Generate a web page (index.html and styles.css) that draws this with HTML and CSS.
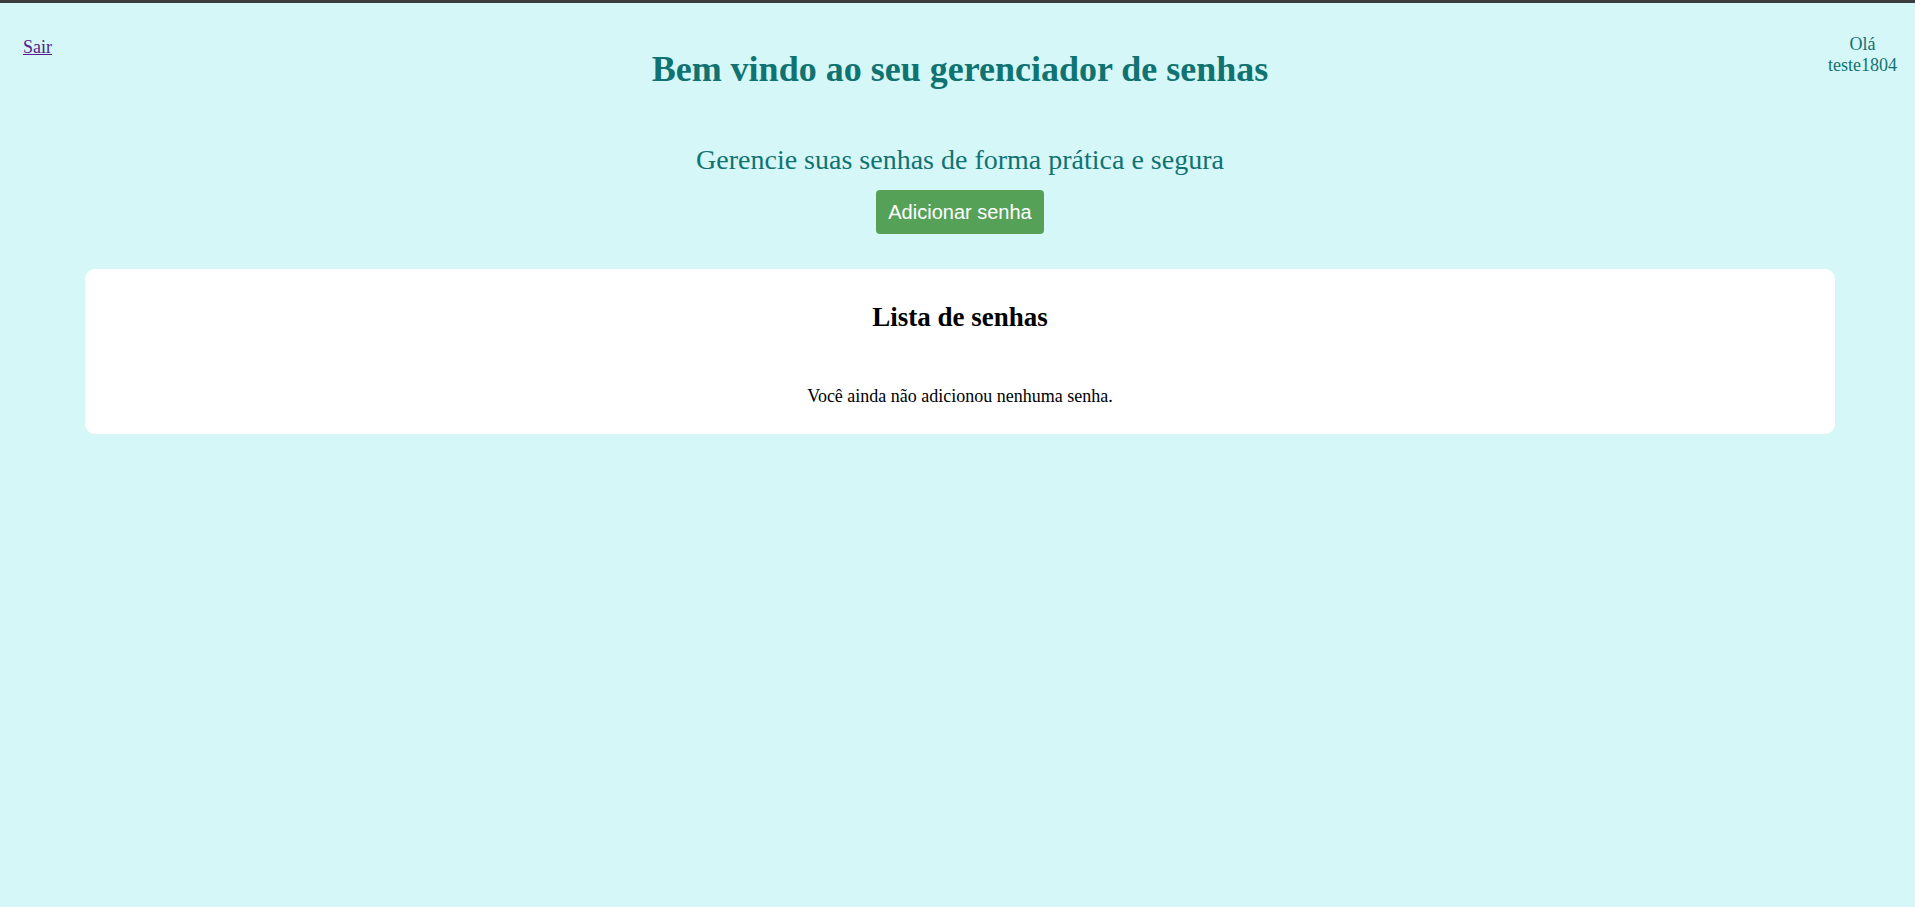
FILE: index.html
```html
<!DOCTYPE html>
<html lang="pt-BR">
<head>
<meta charset="utf-8">
<title>Gerenciador de senhas</title>
<link rel="stylesheet" href="styles.css">
</head>
<body>
<div class="page">
  <header class="header">
    <div class="header-left"><a class="logout" href="#">Sair</a></div>
    <h1 class="title">Bem vindo ao seu gerenciador de senhas</h1>
    <div class="greeting">Olá<br>teste1804</div>
  </header>
  <main class="main">
    <h2 class="subtitle">Gerencie suas senhas de forma prática e segura</h2>
    <button class="add-btn" type="button">Adicionar senha</button>
    <section class="card">
      <h2 class="card-title">Lista de senhas</h2>
      <p class="empty">Você ainda não adicionou nenhuma senha.</p>
    </section>
  </main>
</div>
</body>
</html>
```
FILE: styles.css
```css
html, body {
  margin: 0;
  padding: 0;
}
body {
  background: #d5f7f8;
  border-top: 3px solid #3b3d3d;
  font-family: "Liberation Serif", "Times New Roman", serif;
  font-size: 18px;
  color: #000;
  min-height: 904px;
}
.page {
  padding-left: 5px;
}
.header {
  display: grid;
  grid-template-columns: 1fr auto 1fr;
  align-items: start;
}
.header-left {
  padding-left: 18px;
  padding-top: 34px;
  line-height: 20px;
}
.logout {
  color: #551a8b;
  font-size: 18px;
}
.title {
  margin: 45px 0 0;
  font-size: 36px;
  line-height: 42px;
  font-weight: bold;
  color: #107371;
  text-align: center;
}
.greeting {
  justify-self: end;
  text-align: center;
  padding-top: 31px;
  padding-right: 18px;
  line-height: 20.5px;
  color: #107371;
}
.main {
  display: flex;
  flex-direction: column;
  align-items: center;
}
.subtitle {
  margin: 54px 0 0;
  font-size: 28px;
  line-height: 32px;
  font-weight: normal;
  color: #107371;
}
.add-btn {
  margin-top: 14px;
  background: #56a158;
  color: #fff;
  border: none;
  border-radius: 4px;
  font-family: "Liberation Sans", Arial, sans-serif;
  font-size: 20px;
  line-height: 22px;
  padding: 11px 12px;
  cursor: pointer;
}
.card {
  align-self: stretch;
  margin: 35px 80px 0;
  background: #fff;
  border-radius: 10px;
  padding: 32px 20px 27px;
  text-align: center;
}
.card-title {
  margin: 0;
  font-size: 27px;
  line-height: 32px;
  font-weight: bold;
}
.empty {
  margin: 52px 0 0;
  line-height: 22px;
}
```
